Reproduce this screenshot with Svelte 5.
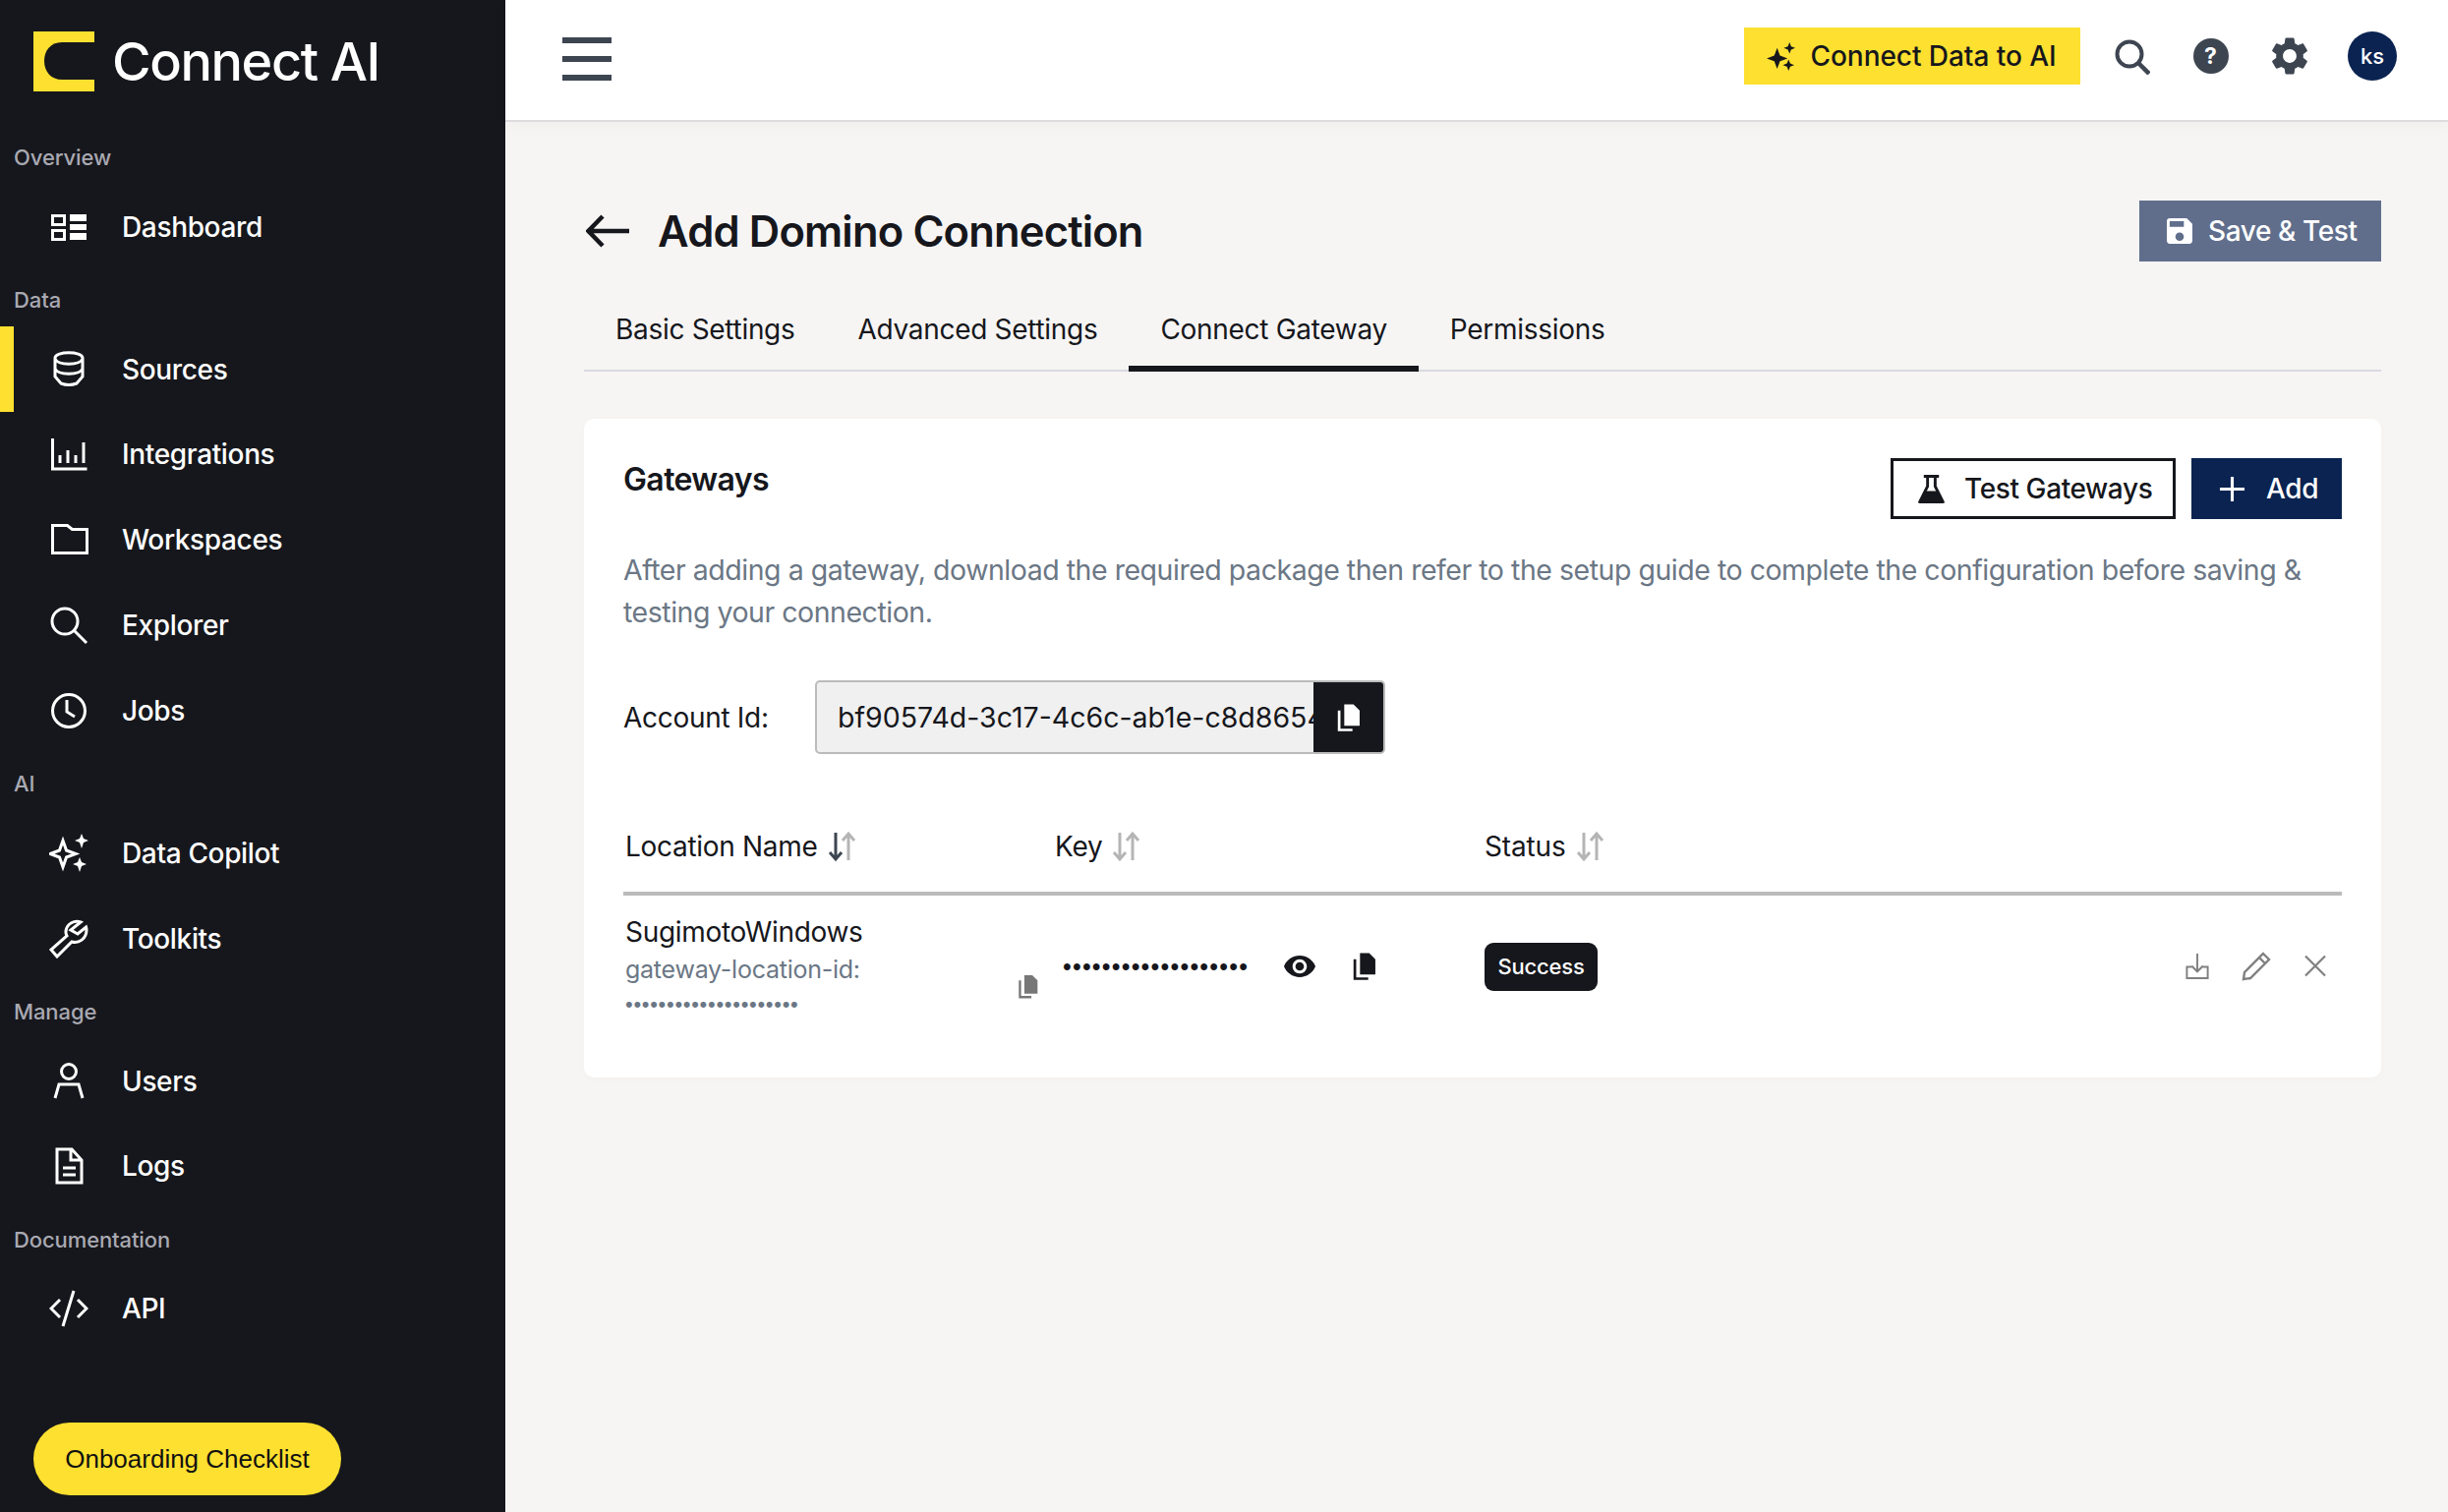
{#snippet copy(cls)}
  <svg class={cls} viewBox="0 0 24 28" aria-hidden="true">
    <path d="M8 1h9l6 6v15H8z" fill="currentColor" />
    <path d="M3 7v19h13" fill="none" stroke="currentColor" stroke-width="2.6" />
  </svg>
{/snippet}

{#snippet sort(active)}
  <svg class="sort" viewBox="0 0 30 32" aria-hidden="true">
    <path d="M9 2v27M3 22l6 7 6-7" fill="none" stroke={active ? '#3d4551' : '#b5b5b5'} stroke-width="3" />
    <path d="M22 30V3M16 10l6-7 6 7" fill="none" stroke="#b5b5b5" stroke-width="3" />
  </svg>
{/snippet}

<div class="app">
  <aside class="sidebar">
    <div class="brand">
      <svg class="logo" viewBox="0 0 62 61" aria-hidden="true">
        <path d="M0 0h62v61H0z" fill="#fde030" />
        <path d="M62 11H29C17 11 11 20 11 30c0 11 7 19 18 19h33z" fill="#16171c" />
      </svg>
      <span class="brand-name">Connect AI</span>
    </div>

    <nav class="nav">
      <div class="label">Overview</div>
      <a class="item">
        <svg viewBox="0 0 40 40" class="ic"><path d="M3.500 8.500h12v9h-12zM3.500 23.500h12v9h-12z" class="ln"/><path d="M21 7h17v7H21zM21 17h17v6H21zM21 26h17v7H21z" class="fl"/></svg>
        <span>Dashboard</span>
      </a>

      <div class="label">Data</div>
      <a class="item active">
        <svg viewBox="0 0 40 40" class="ic"><path d="M6 8c0-7 28-7 28 0v19l-6 7q-8 3-16 0l-6-7zM6 9c3 7 25 7 28 0M6 19c3 7 25 7 28 0" class="ln"/></svg>
        <span>Sources</span>
      </a>
      <a class="item">
        <svg viewBox="0 0 40 40" class="ic"><path d="M3.500 4v31h35" class="ln"/><path d="M11 21v8M19 16v13M27 21v8M35 8v21" class="ln"/></svg>
        <span>Integrations</span>
      </a>
      <a class="item">
        <svg viewBox="0 0 40 40" class="ic"><path d="M3.500 5.500h15l5 4h15v24h-35z" class="ln"/></svg>
        <span>Workspaces</span>
      </a>
      <a class="item">
        <svg viewBox="0 0 40 40" class="ic"><circle cx="16" cy="16" r="13" class="ln"/><path d="M25.500 25.500L38 38" class="ln"/></svg>
        <span>Explorer</span>
      </a>
      <a class="item">
        <svg viewBox="0 0 40 40" class="ic"><circle cx="20" cy="20" r="16.500" class="ln"/><path d="M18 9v12l8 5" class="ln"/></svg>
        <span>Jobs</span>
      </a>

      <div class="label">AI</div>
      <a class="item">
        <svg viewBox="0 0 40 40" class="ic"><path d="M14 7l3.500 10L27 20.500l-9.500 3.500L14 34l-3.500-10L1 20.500l9.500-3.500z" class="ln"/><path d="M33 0l2 5 5 2-5 2-2 6-2-6-5-2 5-2zM31 24l2 5 5 2-5 2-2 6-2-6-5-2 5-2z" class="fl"/></svg>
        <span>Data Copilot</span>
      </a>
      <a class="item">
        <svg viewBox="0 0 40 40" class="ic"><path d="M32 3c-6-2-14 1-15 9-.2 2 .2 3.500 1 5L2 31l6 7 15-15c7 2 15-3 15-12 0-1-.2-2-.5-3L29 15l-7-4z" class="ln"/></svg>
        <span>Toolkits</span>
      </a>

      <div class="label">Manage</div>
      <a class="item">
        <svg viewBox="0 0 40 40" class="ic"><circle cx="20" cy="10" r="7.500" class="ln"/><path d="M6 37l4-14h20l4 14" class="ln"/></svg>
        <span>Users</span>
      </a>
      <a class="item">
        <svg viewBox="0 0 40 40" class="ic"><path d="M8 3h15l10 11v23H8zM22 3v11h11M14 22h13M14 29h13" class="ln"/></svg>
        <span>Logs</span>
      </a>

      <div class="label">Documentation</div>
      <a class="item">
        <svg viewBox="0 0 40 40" class="ic"><path d="M11 11L2 20l9 9M29 11l9 9-9 9M25 2l-11 36" class="ln"/></svg>
        <span>API</span>
      </a>
    </nav>

    <button class="onboard">Onboarding Checklist</button>
  </aside>

  <div class="main">
    <header class="topbar">
      <div class="burger"><i></i><i></i><i></i></div>
      <div class="top-actions">
        <button class="connect">
          <svg viewBox="0 0 30 30" class="spark"><path d="M11 6l3 8 8 3-8 3-3 8-3-8-8-3 8-3zM24 0l1.700 4.300L30 6l-4.300 1.700L24 12l-1.700-4.300L18 6l4.300-1.700zM23 18l1.700 4.300L29 24l-4.300 1.700L23 30l-1.700-4.300L17 24l4.300-1.700z" fill="#16171c"/></svg>
          <span>Connect Data to AI</span>
        </button>
        <svg viewBox="0 0 36 36" class="top-search"><circle cx="15" cy="15" r="12.500" fill="none" stroke="#3d4551" stroke-width="4"/><path d="M24 24l11 11" stroke="#3d4551" stroke-width="4.500" fill="none"/></svg>
        <div class="help">?</div>
        <svg viewBox="0 0 24 24" class="gear"><path fill="#3d4551" d="M19.140 12.940c.04-.3.06-.61.06-.94 0-.32-.02-.64-.07-.94l2.030-1.580c.18-.14.23-.41.12-.61l-1.920-3.320c-.12-.22-.37-.29-.59-.22l-2.390.96c-.5-.38-1.030-.7-1.620-.94l-.36-2.540c-.04-.24-.24-.41-.48-.41h-3.840c-.24 0-.43.17-.47.41l-.36 2.540c-.59.24-1.130.57-1.620.94l-2.390-.96c-.22-.08-.47 0-.59.22L2.740 8.870c-.12.21-.08.47.12.61l2.030 1.580c-.05.3-.09.63-.09.94s.02.64.07.94l-2.030 1.580c-.18.14-.23.41-.12.61l1.920 3.320c.12.22.37.29.59.22l2.390-.96c.5.38 1.030.7 1.620.94l.36 2.540c.05.24.24.41.48.41h3.840c.24 0 .44-.17.47-.41l.36-2.540c.59-.24 1.130-.56 1.620-.94l2.390.96c.22.08.47 0 .59-.22l1.920-3.320c.12-.22.07-.47-.12-.61l-2.010-1.580zM12 15.600c-1.980 0-3.600-1.620-3.600-3.600s1.620-3.600 3.600-3.600 3.600 1.620 3.600 3.600-1.620 3.600-3.600 3.600z"/></svg>
        <div class="avatar">ks</div>
      </div>
    </header>

    <main class="content">
      <div class="title-row">
        <div class="title-left">
          <svg viewBox="0 0 44 34" class="back"><path d="M44 17H3M17 2L2.500 17 17 32" fill="none" stroke="#16171c" stroke-width="4.500"/></svg>
          <h1>Add Domino Connection</h1>
        </div>
        <button class="save">
          <svg viewBox="3 3 18 18" class="save-ic"><path fill="#fff" d="M17 3H5c-1.110 0-2 .9-2 2v14c0 1.100.89 2 2 2h14c1.100 0 2-.9 2-2V7l-4-4zm-5 16c-1.660 0-3-1.340-3-3s1.340-3 3-3 3 1.340 3 3-1.340 3-3 3zm3-10H5V5h10v4z"/></svg>
          <span>Save &amp; Test</span>
        </button>
      </div>

      <div class="tabs">
        <a class="tab">Basic Settings</a>
        <a class="tab">Advanced Settings</a>
        <a class="tab on">Connect Gateway</a>
        <a class="tab">Permissions</a>
      </div>

      <section class="card">
        <div class="card-head">
          <h2>Gateways</h2>
          <div class="card-btns">
            <button class="test">
              <svg viewBox="0 0 28 30" class="flask"><path d="M6 1.500h16M10 2v10L2 28h24l-8-16V2" fill="none" stroke="#16171c" stroke-width="3"/><path d="M7 17h14l6 13H1z" fill="#16171c"/></svg>
              <span>Test Gateways</span>
            </button>
            <button class="add">
              <svg viewBox="0 0 28 28" class="plus"><path d="M14 1v26M1 14h26" stroke="#fff" stroke-width="3.200" fill="none"/></svg>
              <span>Add</span>
            </button>
          </div>
        </div>

        <p class="desc">After adding a gateway, download the required package then refer to the setup guide to complete the configuration before saving &amp; testing your connection.</p>

        <div class="acct">
          <span class="acct-label">Account Id:</span>
          <div class="acct-input">
            <span class="acct-val">bf90574d-3c17-4c6c-ab1e-c8d8654</span>
            <div class="acct-copy">{@render copy('ic-copy-w')}</div>
          </div>
        </div>

        <div class="thead">
          <div class="th">Location Name {@render sort(true)}</div>
          <div class="th">Key {@render sort(false)}</div>
          <div class="th status-th">Status {@render sort(false)}</div>
        </div>

        <div class="trow">
          <div class="cell-name">
            <div class="name">SugimotoWindows</div>
            <div class="sub">
              <div class="sub-text">
                <div class="sub-label">gateway-location-id:</div>
                <div class="sub-dots">•••••••••••••••••••••</div>
              </div>
              {@render copy('ic-copy-g')}
            </div>
          </div>
          <div class="cell-key">
            <span class="key-dots">•••••••••••••••••••</span>
            <svg viewBox="1 4 22 16" class="eye"><path fill="#16171c" d="M12 4.500C7 4.500 2.730 7.610 1 12c1.730 4.390 6 7.500 11 7.500s9.270-3.110 11-7.500c-1.730-4.390-6-7.500-11-7.500zM12 17c-2.760 0-5-2.240-5-5s2.240-5 5-5 5 2.240 5 5-2.240 5-5 5zm0-8c-1.660 0-3 1.340-3 3s1.340 3 3 3 3-1.340 3-3-1.340-3-3-3z"/></svg>
            {@render copy('ic-copy-k')}
          </div>
          <div class="cell-status"><span class="badge">Success</span></div>
          <div class="cell-actions">
            <svg viewBox="0 0 24 28" class="act"><path d="M12 1v19M6 14l6 6 6-6M6 15H1v12h22V15h-5" fill="none" stroke="#808080" stroke-width="2"/></svg>
            <svg viewBox="0 0 30 30" class="act2"><path d="M22 2l6 6L9 27l-7 1 1-7zM18 6l6 6" fill="none" stroke="#808080" stroke-width="2.400"/></svg>
            <svg viewBox="0 0 24 24" class="act"><path d="M2 2l20 20M22 2L2 22" fill="none" stroke="#808080" stroke-width="2.200"/></svg>
          </div>
        </div>
      </section>
    </main>
  </div>
</div>

<style>
  :global(body) {
    margin: 0;
    background: #f6f5f4;
  }
  .app {
    display: flex;
    width: 2490px;
    height: 1538px;
    overflow: hidden;
    font-family: Inter, "Liberation Sans", sans-serif;
    color: #16171c;
  }
  button {
    font-family: inherit;
    border: none;
    cursor: pointer;
    display: flex;
    align-items: center;
    padding: 0;
  }
  .sidebar {
    width: 514px;
    flex: none;
    background: #16171c;
    display: flex;
    flex-direction: column;
    color: #fff;
  }
  .brand {
    height: 129px;
    flex: none;
    box-sizing: border-box;
    padding: 32px 0 0 34px;
    display: flex;
    align-items: flex-start;
    gap: 18px;
  }
  .logo {
    width: 62px;
    height: 61px;
    flex: none;
  }
  .brand-name {
    font-size: 54px;
    line-height: 61px;
    font-weight: 500;
    letter-spacing: -1.400px;
    white-space: nowrap;
  }
  .nav {
    flex: 1;
    display: flex;
    flex-direction: column;
  }
  .label {
    height: 58.200px;
    box-sizing: border-box;
    padding: 18px 0 0 14px;
    font-size: 22px;
    line-height: 26px;
    font-weight: 500;
    color: #a9a9b2;
    letter-spacing: -0.100px;
  }
  .item {
    height: 86.800px;
    flex: none;
    display: flex;
    align-items: center;
    padding-left: 50px;
    gap: 34px;
    font-size: 28px;
    font-weight: 500;
    letter-spacing: -0.350px;
    box-sizing: border-box;
    position: relative;
  }
  .item.active::before {
    content: "";
    position: absolute;
    left: 0;
    top: 0;
    bottom: 0;
    width: 14px;
    background: #fde030;
  }
  .ic {
    width: 40px;
    height: 40px;
    flex: none;
  }
  .ln {
    fill: none;
    stroke: #fff;
    stroke-width: 3;
  }
  .fl {
    fill: #fff;
  }
  .onboard {
    margin: 0 0 17px 34px;
    width: 313px;
    height: 74px;
    border-radius: 37px;
    background: #fde030;
    color: #111;
    font-family: "Liberation Sans", Arial, sans-serif;
    font-size: 26px;
    justify-content: center;
    flex: none;
  }
  .main {
    flex: 1;
    min-width: 0;
    display: flex;
    flex-direction: column;
  }
  .topbar {
    height: 124px;
    flex: none;
    box-sizing: border-box;
    background: #fff;
    border-bottom: 2px solid #dddddf;
    box-shadow: 0 4px 16px rgba(0, 0, 0, 0.03);
    display: flex;
    align-items: flex-start;
    justify-content: space-between;
    padding: 28px 52px 0 58px;
  }
  .burger {
    display: flex;
    flex-direction: column;
    gap: 13px;
    width: 50px;
    padding-top: 10px;
  }
  .burger i {
    height: 6px;
    background: #3d4551;
    display: block;
  }
  .top-actions {
    display: flex;
    align-items: center;
    height: 58px;
  }
  .connect {
    width: 342px;
    height: 58px;
    background: #fde030;
    color: #16171c;
    font-size: 28px;
    font-weight: 500;
    letter-spacing: -0.050px;
    padding-left: 23px;
    gap: 16px;
    flex: none;
  }
  .spark {
    width: 29px;
    height: 29px;
    flex: none;
  }
  .top-search {
    width: 36px;
    height: 36px;
    margin-left: 35px;
    margin-top: 2px;
  }
  .help {
    width: 36px;
    height: 36px;
    border-radius: 50%;
    background: #3d4551;
    color: #fff;
    font-size: 23px;
    font-weight: 700;
    text-align: center;
    line-height: 36px;
    margin-left: 44px;
  }
  .gear {
    width: 46px;
    height: 46px;
    margin-left: 39px;
    margin-top: -1px;
  }
  .avatar {
    width: 50px;
    height: 50px;
    border-radius: 50%;
    background: #0a2351;
    color: #fff;
    font-size: 22px;
    font-weight: 500;
    text-align: center;
    line-height: 50px;
    margin-left: 36.500px;
  }
  .content {
    padding: 80px 68px 0 80px;
    flex: 1;
    min-height: 0;
  }
  .title-row {
    display: flex;
    justify-content: space-between;
    align-items: center;
    height: 62px;
  }
  .title-left {
    display: flex;
    align-items: center;
    gap: 29px;
    padding-left: 2px;
  }
  .back {
    width: 44px;
    height: 34px;
    flex: none;
  }
  h1 {
    margin: 0;
    font-size: 43.500px;
    font-weight: 600;
    letter-spacing: -0.850px;
    line-height: 62px;
    white-space: nowrap;
  }
  .save {
    width: 246px;
    height: 62px;
    background: #606e8c;
    color: #fff;
    font-size: 28px;
    font-weight: 500;
    letter-spacing: -0.400px;
    padding-left: 28px;
    gap: 16px;
    flex: none;
  }
  .save-ic {
    width: 26px;
    height: 26px;
  }
  .tabs {
    display: flex;
    margin-top: 36px;
    height: 76px;
    box-sizing: border-box;
    border-bottom: 2px solid #d9d9e0;
  }
  .tab {
    padding: 0 32px;
    height: 76px;
    box-sizing: border-box;
    line-height: 66px;
    font-size: 28px;
    letter-spacing: -0.300px;
    white-space: nowrap;
  }
  .tab.on {
    border-bottom: 6px solid #16171c;
  }
  .card {
    margin-top: 48px;
    height: 670px;
    box-sizing: border-box;
    background: #fff;
    border-radius: 10px;
    box-shadow: 0 2px 10px rgba(0, 0, 0, 0.02);
    padding: 40px;
  }
  .card-head {
    display: flex;
    justify-content: space-between;
    align-items: flex-start;
  }
  h2 {
    margin: 0;
    font-size: 32px;
    font-weight: 600;
    letter-spacing: -0.600px;
    line-height: 44px;
  }
  .card-btns {
    display: flex;
    gap: 16px;
  }
  .test {
    width: 290px;
    height: 62px;
    box-sizing: border-box;
    background: #fff;
    border: 3px solid #16171c;
    color: #16171c;
    font-size: 28px;
    font-weight: 500;
    letter-spacing: -0.400px;
    padding-left: 25px;
    gap: 20px;
  }
  .flask {
    width: 27px;
    height: 29px;
    flex: none;
  }
  .add {
    width: 153px;
    height: 62px;
    background: #0a2351;
    color: #fff;
    font-size: 28px;
    font-weight: 500;
    letter-spacing: -0.400px;
    padding-left: 28px;
    gap: 21px;
  }
  .plus {
    width: 27px;
    height: 27px;
    flex: none;
  }
  .desc {
    margin: 30px 0 0;
    font-size: 28.500px;
    line-height: 43px;
    color: #6b7785;
    letter-spacing: -0.470px;
    max-width: 1740px;
  }
  .acct {
    margin-top: 48px;
    display: flex;
    align-items: center;
    height: 75px;
  }
  .acct-label {
    width: 195px;
    font-size: 28px;
    letter-spacing: -0.300px;
    flex: none;
  }
  .acct-input {
    width: 580px;
    height: 75px;
    box-sizing: border-box;
    border: 2px solid #bbb;
    border-radius: 5px;
    background: #f0f0f0;
    display: flex;
    overflow: hidden;
    align-items: center;
  }
  .acct-val {
    flex: 1;
    min-width: 0;
    padding-left: 21px;
    font-size: 28.500px;
    white-space: nowrap;
    overflow: hidden;
  }
  .acct-copy {
    width: 71px;
    height: 100%;
    flex: none;
    background: #16171c;
    display: flex;
    align-items: center;
    justify-content: center;
    color: #fff;
  }
  .ic-copy-w {
    width: 25px;
    height: 30px;
  }
  .ic-copy-g {
    width: 23px;
    height: 25px;
    color: #777;
    flex: none;
  }
  .ic-copy-k {
    width: 25px;
    height: 30px;
    color: #16171c;
    margin-left: 37px;
  }
  .thead {
    margin-top: 48px;
    height: 92px;
    display: grid;
    grid-template-columns: 437px 437px 1fr;
    align-items: center;
  }
  .th {
    padding-left: 2px;
    font-size: 28px;
    letter-spacing: -0.300px;
    display: flex;
    align-items: center;
    gap: 9px;
  }
  .status-th {
    letter-spacing: -0.150px;
  }
  .sort {
    width: 30px;
    height: 32px;
    flex: none;
  }
  .trow {
    border-top: 4px solid #bbb;
    height: 150px;
    box-sizing: border-box;
    display: grid;
    grid-template-columns: 437px 437px 1fr auto;
    align-items: center;
  }
  .cell-name {
    padding-left: 2px;
    display: flex;
    flex-direction: column;
  }
  .name {
    font-size: 28px;
    letter-spacing: -0.300px;
    line-height: 38px;
  }
  .sub {
    display: flex;
    align-items: center;
    width: 421px;
    justify-content: space-between;
  }
  .sub-label {
    font-size: 25px;
    color: #6b7785;
    letter-spacing: -0.250px;
    line-height: 38px;
  }
  .sub-dots {
    font-size: 22px;
    letter-spacing: 0.700px;
    color: #6b7785;
    line-height: 34px;
    white-space: nowrap;
    font-family: "Liberation Sans", sans-serif;
  }
  .cell-key {
    padding-left: 10px;
    display: flex;
    align-items: center;
    margin-top: -2px;
  }
  .key-dots {
    width: 225px;
    font-size: 25px;
    letter-spacing: 1.200px;
    white-space: nowrap;
    font-family: "Liberation Sans", sans-serif;
    color: #16171c;
    flex: none;
  }
  .eye {
    width: 32px;
    height: 24px;
    flex: none;
  }
  .badge {
    display: inline-flex;
    align-items: center;
    justify-content: center;
    width: 115px;
    height: 49px;
    border-radius: 9px;
    background: #16171c;
    color: #fff;
    font-size: 22px;
    font-weight: 500;
    letter-spacing: -0.200px;
  }
  .cell-status {
    display: flex;
    margin-top: -2px;
    padding-left: 2px;
  }
  .cell-actions {
    display: flex;
    align-items: center;
    gap: 33px;
    padding-right: 15px;
    margin-top: -3px;
  }
  .act {
    width: 24px;
    height: 27px;
  }
  .act2 {
    width: 30px;
    height: 30px;
  }
</style>
